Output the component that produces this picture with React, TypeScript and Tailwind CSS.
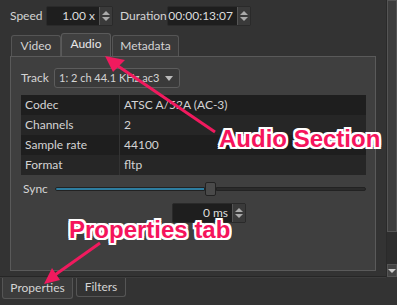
import React from 'react';

const Spin: React.FC<{ text: string; w: string }> = ({ text, w }) => (
  <div className={`flex h-[20px] ${w} rounded-[2px] border border-[#2a2a2a] bg-[#1e1e1e]`}>
    <div className="flex-1 pr-[4px] text-right leading-[18px] text-[#dcdcdc]">{text}</div>
    <div className="flex w-[13px] flex-col items-center justify-center gap-[2px] border-l border-[#555] bg-[#3a3a3a]">
      <div className="h-0 w-0 border-x-[4px] border-b-[4px] border-x-transparent border-b-[#aaa]" />
      <div className="h-0 w-0 border-x-[4px] border-t-[4px] border-x-transparent border-t-[#aaa]" />
    </div>
  </div>
);

const rows = [
  ['Codec', 'ATSC A/52A (AC-3)'],
  ['Channels', '2'],
  ['Sample rate', '44100'],
  ['Format', 'fltp'],
];

const outline =
  '1px 1px 0 #fff,-1px -1px 0 #fff,1px -1px 0 #fff,-1px 1px 0 #fff,2px 0 0 #fff,-2px 0 0 #fff,0 2px 0 #fff,0 -2px 0 #fff,2px 2px 0 #fff,-2px -2px 0 #fff,2px -2px 0 #fff,-2px 2px 0 #fff';

const App: React.FC = () => {
  return (
    <div
      className="relative flex h-[305px] w-[397px] overflow-hidden bg-[#333333] text-[12px] text-[#d4d4d4]"
      style={{ fontFamily: 'Lato, "Noto Sans", sans-serif' }}
    >
      <div className="flex w-[386px] flex-col">
        {/* Top controls */}
        <div className="flex h-[31px] items-center pl-[10px] pt-[1px]">
          <span className="w-[36px]">Speed</span>
          <Spin text="1.00 x" w="w-[67px]" />
          <span className="ml-[7px] w-[47px]">Duration</span>
          <Spin text="00:00:13:07" w="w-[84px]" />
        </div>

        {/* Tabs */}
        <div className="flex h-[25px] items-end pl-[11px]">
          <div className="flex h-[21px] w-[50px] items-center justify-center rounded-t-[3px] border border-b-0 border-[#555] bg-[#3a3a3a]">Video</div>
          <div className="flex h-[23px] w-[50px] items-center justify-center rounded-t-[3px] border border-b-0 border-[#5a5a5a] bg-[#404040] pb-[2px] text-[#e8e8e8]">Audio</div>
          <div className="ml-[1px] flex h-[21px] w-[67px] items-center justify-center rounded-t-[3px] border border-b-0 border-[#555] bg-[#3a3a3a]">Metadata</div>
        </div>

        {/* Panel */}
        <div className="ml-[10px] flex h-[215px] w-[366px] flex-col border border-[#5a5a5a] bg-[#3f3f3f] pl-[10px] pr-[9px]">
          <div className="mt-[11px] flex h-[20px] items-center">
            <span className="w-[33px]">Track</span>
            <div className="flex h-[20px] w-[126px] items-center gap-[4px] whitespace-nowrap rounded-[3px] border border-[#5c5c5c] bg-[#3a3a3a] pl-[4px] pr-[6px] text-[11px]">
              <span className="flex-1">1: 2 ch 44.1 KHz ac3</span>
              <div className="h-0 w-0 border-x-[4px] border-t-[5px] border-x-transparent border-t-[#bbb]" />
            </div>
          </div>
          <div className="mt-[7px] flex flex-col">
            {rows.map((r, i) => (
              <div key={r[0]} className={`flex h-[20px] items-center ${i % 2 ? 'bg-[#262626]' : 'bg-[#1e1e1e]'}`}>
                <span className="w-[99px] border-r border-[#333] pl-[4px] leading-[20px]">{r[0]}</span>
                <span className="pl-[4px]">{r[1]}</span>
              </div>
            ))}
          </div>
          <div className="mt-[5px] flex h-[18px] items-center">
            <span className="w-[34px] pl-[2px]">Sync</span>
            <div className="flex flex-1 items-center">
              <div className="h-[4px] w-[150px] rounded-l-[2px] border border-[#222] bg-[#2d7da0]" />
              <div className="h-[14px] w-[11px] rounded-[2px] border border-[#222] bg-[#4a4a4a]" />
              <div className="h-[4px] flex-1 rounded-r-[2px] border border-[#222] bg-[#2b2b2b]" />
            </div>
          </div>
          <div className="mt-[5px] flex pl-[151px]">
            <Spin text="0 ms" w="w-[74px]" />
          </div>
        </div>

        <div className="mt-[5px] border-t border-[#262626]" />
        {/* Bottom tabs */}
        <div className="flex h-[28px] items-start border-t border-[#3c3c3c] pl-[2px]">
          <div className="flex h-[21px] w-[71px] items-center justify-center rounded-b-[3px] border border-t-0 border-[#555] bg-[#3c3c3c]">Properties</div>
          <div className="ml-[3px] flex h-[19px] w-[50px] items-center justify-center rounded-b-[3px] border border-t-0 border-[#555] bg-[#333]">Filters</div>
        </div>
      </div>

      {/* Scrollbar */}
      <div className="flex h-[277px] w-[11px] flex-col border-l border-[#2a2a2a]">
        <div className="h-[232px] border border-[#555] bg-[#3d3d3d]" />
        <div className="flex-1 bg-[#2e2e2e]" />
        <div className="flex h-[13px] items-center justify-center border border-[#555] bg-[#444]">
          <div className="h-0 w-0 border-x-[4px] border-t-[4px] border-x-transparent border-t-[#ccc]" />
        </div>
      </div>

      {/* Annotations */}
      <svg className="pointer-events-none absolute left-0 top-0" width="397" height="305">
        <line x1="215" y1="132" x2="112" y2="62" stroke="#f01a5e" strokeWidth="3" />
        <polygon points="105,56 125,60 113,72" fill="#f01a5e" />
        <line x1="100" y1="243" x2="52" y2="277" stroke="#f01a5e" strokeWidth="3" />
        <polygon points="44,284 52,268 60,280" fill="#f01a5e" />
      </svg>
      <div
        className="absolute left-[219px] top-[127px] whitespace-nowrap text-[24px] font-bold leading-none text-[#f5145c]"
        style={{ fontFamily: '"Liberation Sans", Arial, sans-serif', textShadow: outline }}
      >
        Audio Section
      </div>
      <div
        className="absolute left-[69px] top-[218px] whitespace-nowrap text-[24px] font-bold leading-none text-[#f5145c]"
        style={{ fontFamily: '"Liberation Sans", Arial, sans-serif', textShadow: outline }}
      >
        Properties tab
      </div>
    </div>
  );
};

export default App;
